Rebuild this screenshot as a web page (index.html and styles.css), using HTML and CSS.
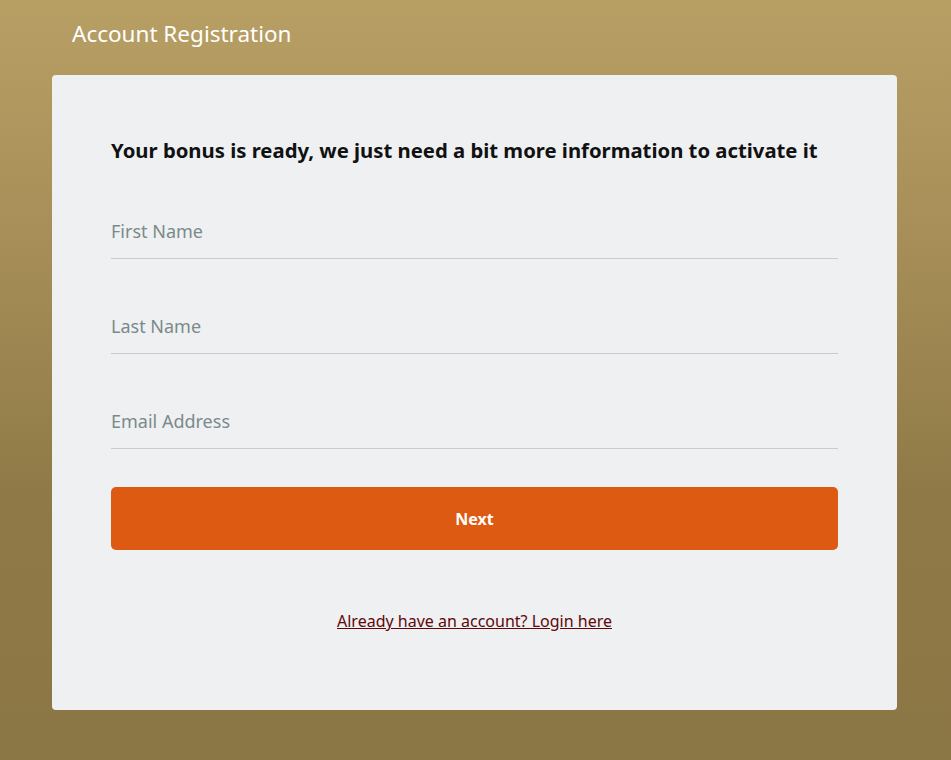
FILE: index.html
```
<!DOCTYPE html>
<html>
<head>
  <meta charset="UTF-8">
  <meta name="viewport" content="width=device-width, initial-scale=1.0">
  <title>Account Registration</title>
  <link rel="stylesheet" href="styles.css">
</head>
<body>
  <div class="wrap">
    <h1 class="title">Account Registration</h1>
    <div class="card">
      <h2>Your bonus is ready, we just need a bit more information to activate it</h2>
      <div class="form">
        <div class="field">
          <input type="text" name="firstname" placeholder="First Name">
        </div>
        <div class="field">
          <input type="text" name="lastname" placeholder="Last Name">
        </div>
        <div class="field">
          <input type="email" name="email" placeholder="Email Address">
        </div>
        <button class="next">Next</button>
        <p class="login"><a href="#">Already have an account? Login here</a></p>
      </div>
    </div>
  </div>
</body>
</html>
```

FILE: styles.css
```
* {padding: 0; margin: 0; box-sizing: border-box;}

html, body {
  width: 100%;
  height: 100%;
}
body {
  font-family: "Segoe UI", "Noto Sans", sans-serif;
  background: linear-gradient(to bottom, #b79f64 0%, #a88f59 30%, #8f7a47 65%, #8b7645 100%);
}
.wrap {
  padding: 0 54px 0 52px;
}
.title {
  padding: 18px 0 0 20px;
  height: 75px;
  font-size: 22.5px;
  font-weight: 400;
  color: #fff;
  line-height: 32px;
}
.card {
  height: 635px;
  padding: 63px 59px 0;
  border-radius: 4px;
  background: #eef0f2;
}
.card h2 {
  font-size: 20.3px;
  font-weight: 700;
  color: #111;
  line-height: 24px;
}
.form {
  padding-top: 41px;
}
.field {
  height: 95px;
}
.field input {
  display: block;
  width: 100%;
  height: 56px;
  padding: 0;
  border: 0;
  border-bottom: 1px solid #c9cbcf;
  background: transparent;
  font-family: inherit;
  font-size: 18px;
  color: #333;
  outline: none;
}
.field input::placeholder {
  color: #7b8a8b;
}
.next {
  display: block;
  width: 100%;
  height: 63px;
  margin-top: -1px;
  border: 0;
  border-radius: 5px;
  background: #dc5a12;
  font-family: inherit;
  font-size: 16px;
  font-weight: 700;
  color: #fff;
}
.login {
  padding-top: 60px;
  text-align: center;
  font-size: 16px;
}
.login a {
  color: #600808;
}
```
